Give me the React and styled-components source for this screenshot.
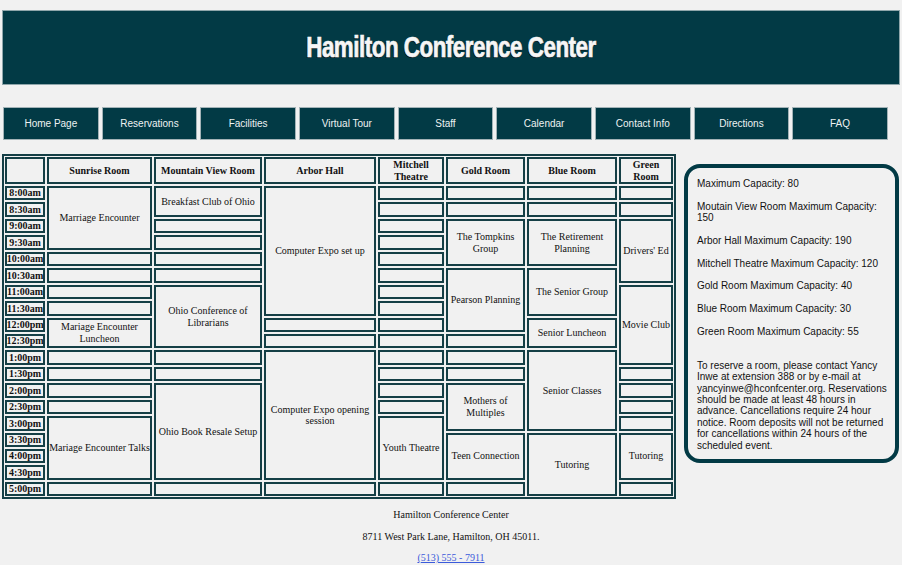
import React from 'react';
import styled, { createGlobalStyle } from 'styled-components';

const TEAL = '#023a45';
const GRID = '#153f46';

const GlobalStyle = createGlobalStyle`
  html, body { margin: 0; padding: 0; background: #f1f1f1; }
  body { font-family: "Liberation Serif", "Times New Roman", serif; color: #111; }
`;

const Page = styled.div`
  width: 902px;
  box-sizing: border-box;
  padding: 10px 2px 0;
`;

const Banner = styled.header`
  height: 75px;
  box-sizing: border-box;
  background: ${TEAL};
  border: 1px solid #8fa6ab;
  display: flex;
  align-items: center;
  justify-content: center;
`;

const Title = styled.h1`
  margin: 0;
  font-family: Impact, "Liberation Sans", Arial, sans-serif;
  font-weight: 700;
  font-size: 29px;
  letter-spacing: -0.6px;
  color: #f6f6f6;
  -webkit-text-stroke: 0.7px #f6f6f6;
  text-shadow: -1px 1px 0 #111;
  transform: scaleX(0.77);
  white-space: nowrap;
`;

const Nav = styled.nav`
  margin-top: 22px;
  padding-left: 1px;
  display: grid;
  grid-template-columns: repeat(9, 95.67px);
  column-gap: 3px;
`;

const NavButton = styled.a`
  height: 33px;
  box-sizing: border-box;
  background: ${TEAL};
  border: 1px solid #a3b3b7;
  color: #eef2f2;
  font: 10px "Liberation Sans", Arial, sans-serif;
  display: flex;
  align-items: center;
  justify-content: center;
  text-decoration: none;
`;

const Main = styled.main`
  margin-top: 14px;
  display: flex;
  align-items: flex-start;
`;

const Schedule = styled.div`
  flex: none;
  display: grid;
  grid-template-columns: 40px 105px 108px 112px 66px 79px 90px 54px;
  grid-template-rows: 27px repeat(19, 14.44px);
  gap: 2px;
  padding: 1px;
  border: 2px solid ${GRID};
`;

const Cell = styled.div`
  grid-column: ${(p) => p.$col};
  grid-row: ${(p) => p.$row} / span ${(p) => p.$span};
  border: 2px solid ${GRID};
  display: flex;
  align-items: center;
  justify-content: center;
  text-align: center;
  font-size: 10px;
  line-height: 11.5px;
  font-weight: ${(p) => (p.$bold ? 700 : 400)};
  white-space: ${(p) => (p.$nowrap ? 'nowrap' : 'normal')};
  color: #111;
`;

const InfoBox = styled.aside`
  flex: none;
  margin: 10px 0 0 8px;
  width: 215px;
  box-sizing: border-box;
  border: 4px solid ${TEAL};
  border-radius: 16px;
  padding: 10px 6px 8px 9px;
  font: 10px/11.4px "Liberation Sans", Arial, sans-serif;
  color: #111;
`;

const Info = styled.p`
  margin: ${(p) => (p.$gap ? '22.7px' : '0')} 0 11.3px;
  &:last-child { margin-bottom: 0; }
`;

const Footer = styled.footer`
  margin-top: 10px;
  text-align: center;
  font-size: 10px;
  line-height: 11.5px;
`;

const FootLine = styled.p`
  margin: 0 0 10px;
`;

const Phone = styled.a`
  color: #3b5bdb;
  text-decoration: underline;
`;

const navItems = ['Home Page', 'Reservations', 'Facilities', 'Virtual Tour', 'Staff', 'Calendar', 'Contact Info', 'Directions', 'FAQ'];

const rooms = ['Sunrise Room', 'Mountain View Room', 'Arbor Hall', 'Mitchell Theatre', 'Gold Room', 'Blue Room', 'Green Room'];

const times = ['8:00am', '8:30am', '9:00am', '9:30am', '10:00am', '10:30am', '11:00am', '11:30am', '12:00pm', '12:30pm', '1:00pm', '1:30pm', '2:00pm', '2:30pm', '3:00pm', '3:30pm', '4:00pm', '4:30pm', '5:00pm'];

const E = (n) => Array.from({ length: n }, () => ['', 1]);

const bookings = [
  [['Marriage Encounter', 4], ...E(4), ['Mariage Encounter Luncheon', 2], ...E(4), ['Mariage Encounter Talks', 4], ...E(1)],
  [['Breakfast Club of Ohio', 2], ...E(4), ['Ohio Conference of Librarians', 4], ...E(2), ['Ohio Book Resale Setup', 6], ...E(1)],
  [['Computer Expo set up', 8], ...E(2), ['Computer Expo opening session', 8], ...E(1)],
  [...E(14), ['Youth Theatre', 4], ...E(1)],
  [...E(2), ['The Tompkins Group', 3], ['Pearson Planning', 4], ...E(3), ['Mothers of Multiples', 3], ['Teen Connection', 3], ...E(1)],
  [...E(2), ['The Retirement Planning', 3], ['The Senior Group', 3], ['Senior Luncheon', 2], ['Senior Classes', 5], ['Tutoring', 4]],
  [...E(2), ["Drivers' Ed", 4], ['Movie Club', 5], ...E(4), ['Tutoring', 3], ...E(1)],
];

function ScheduleGrid() {
  const cells = [];
  cells.push(<Cell key="corner" $col={1} $row={1} $span={1} />);
  rooms.forEach((r, i) => {
    cells.push(
      <Cell key={'h' + i} $col={i + 2} $row={1} $span={1} $bold>
        {r}
      </Cell>
    );
  });
  times.forEach((t, i) => {
    cells.push(
      <Cell key={'t' + i} $col={1} $row={i + 2} $span={1} $bold $nowrap>
        {t}
      </Cell>
    );
  });
  bookings.forEach((col, ci) => {
    let row = 2;
    col.forEach(([label, span], k) => {
      cells.push(
        <Cell key={`b${ci}-${k}`} $col={ci + 2} $row={row} $span={span}>
          {label}
        </Cell>
      );
      row += span;
    });
  });
  return <Schedule>{cells}</Schedule>;
}

export default function App() {
  return (
    <>
      <GlobalStyle />
      <Page>
        <Banner>
          <Title>Hamilton Conference Center</Title>
        </Banner>
        <Nav>
          {navItems.map((n) => (
            <NavButton key={n} href="#">
              {n}
            </NavButton>
          ))}
        </Nav>
        <Main>
          <ScheduleGrid />
          <InfoBox>
            <Info>Maximum Capacity: 80</Info>
            <Info>Moutain View Room Maximum Capacity: 150</Info>
            <Info>Arbor Hall Maximum Capacity: 190</Info>
            <Info>Mitchell Theatre Maximum Capacity: 120</Info>
            <Info>Gold Room Maximum Capacity: 40</Info>
            <Info>Blue Room Maximum Capacity: 30</Info>
            <Info>Green Room Maximum Capacity: 55</Info>
            <Info $gap>
              To reserve a room, please contact Yancy Inwe at extension 388 or by e-mail at
              yancyinwe@hconfcenter.org. Reservations should be made at least 48 hours in advance.
              Cancellations require 24 hour notice. Room deposits will not be returned for
              cancellations within 24 hours of the scheduled event.
            </Info>
          </InfoBox>
        </Main>
        <Footer>
          <FootLine>Hamilton Conference Center</FootLine>
          <FootLine>8711 West Park Lane, Hamilton, OH 45011.</FootLine>
          <FootLine>
            <Phone href="#">(513) 555 - 7911</Phone>
          </FootLine>
        </Footer>
      </Page>
    </>
  );
}
